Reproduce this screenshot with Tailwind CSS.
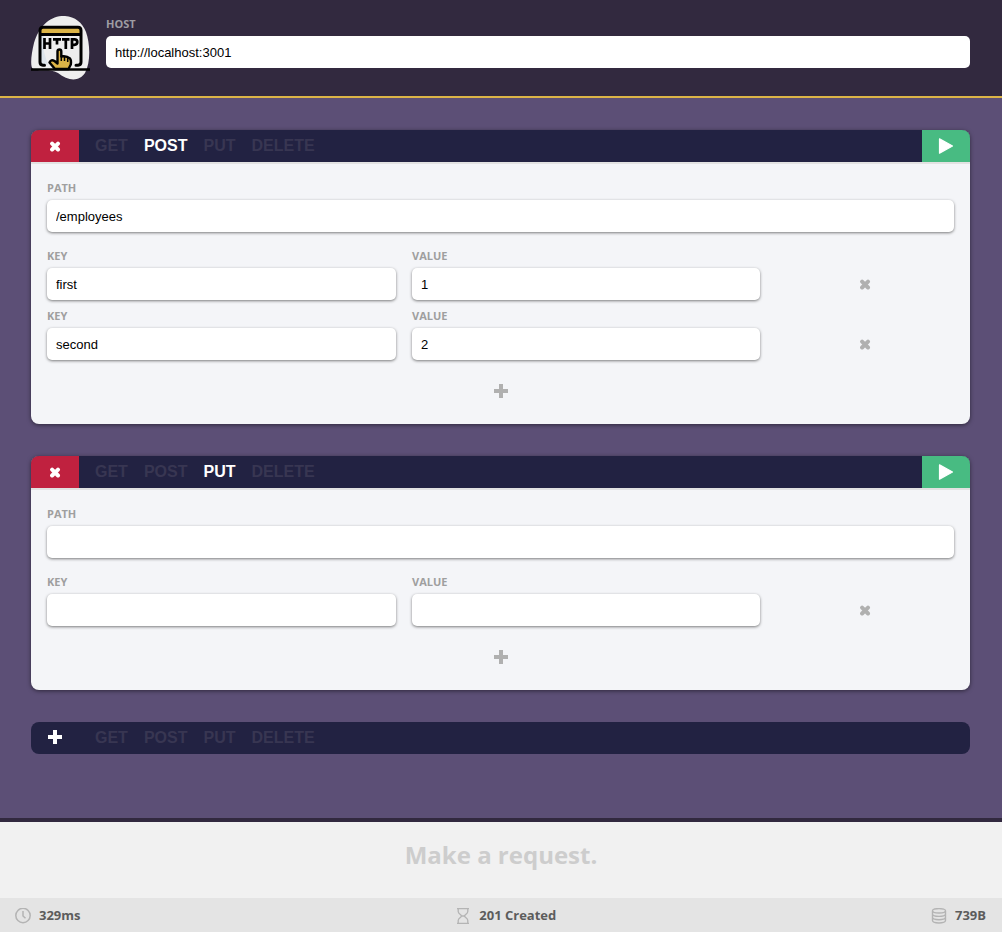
<!DOCTYPE html>
<html lang="en">
<head>
<meta charset="utf-8">
<title>HTTP client</title>
<script src="https://cdn.jsdelivr.net/npm/@tailwindcss/browser@4"></script>
</head>
<body class="flex min-h-screen flex-col bg-[#5c4f76] font-['Open_Sans',sans-serif]">
<svg class="hidden">
  <symbol id="cross" viewBox="0 0 12 12"><path d="M3.1 3.6L9 9.5M9 3.6L3.1 9.5" stroke="currentColor" stroke-width="4" stroke-linecap="round"/></symbol>
  <symbol id="plus" viewBox="0 0 14 14"><path d="M5 0h4v5h5v4H9v5H5V9H0V5h5z" fill="currentColor"/></symbol>
  <symbol id="play" viewBox="0 0 16 16"><path d="M1.5 .8L14.5 8L1.5 15.2z" fill="currentColor" stroke="currentColor" stroke-width="1.2" stroke-linejoin="round"/></symbol>
</svg>

<header class="flex h-[98px] items-start gap-4 border-b-2 border-[#dcb447] bg-[#32293f] py-4 pl-[31px] pr-8">
  <svg class="h-16 w-[59px] shrink-0" viewBox="0 0 59 64" fill="none" role="img" aria-label="HTTP">
    <path d="M34 0C20-1 8 10 3 27C0 39-1 51 2 53C10 56 18 52 27 57C37 65 48 66 54 57C60 46 59 27 55 16C51 6 44 1 34 0z" fill="#eeeeee"/>
    <path d="M10 20H13V36L17 49H12Q10 48 10 45z" fill="#dde4ea"/>
    <path d="M9 18V14Q9 11.5 11.5 11.5H47.500Q50 11.500 50 14V18z" fill="#dcb447"/>
    <path d="M13.500 49.300H12Q9 49 9 46V14.500Q9 11.300 12 11.300H47Q50 11.300 50 14.500V46Q50 49 47 49.300H45M9 18.500H50" stroke="#000" stroke-width="3" stroke-linecap="round"/>
    <path d="M0 53.500H59" stroke="#000" stroke-width="2.600"/>
    <path d="M13.500 22V33M19 22V33M13.500 27.500H19M22 23.400H30M26 23V28.500M31 23.400H38.500M34.800 23V33M41 33V23.300H43.300Q46.300 23.300 46.300 26T43.300 28.800H41" stroke="#000" stroke-width="2.700"/>
    <path d="M24 53L18.500 46.500Q20 43 23.500 45L26.500 47.500V35.500Q26.500 33.500 28.400 33.500T30.300 35.500V40.500Q35.500 39.500 39 42.500Q40.500 44 39.800 48.500L37.500 53z" fill="#dcb447" stroke="#000" stroke-width="2.400" stroke-linejoin="round"/>
    <path d="M30.300 40V45M33.500 41V45M36.700 42V46" stroke="#000" stroke-width="1.500"/>
  </svg>
  <div class="flex min-w-0 flex-1 flex-col gap-1">
    <label for="host" class="text-[11px] leading-4 font-bold text-[#9e9ca3]">HOST</label>
    <input id="host" value="http://localhost:3001" class="h-8 w-full rounded-[5px] bg-white px-[9px] font-['Liberation_Sans',sans-serif] text-[13px] text-black">
  </div>
</header>

<main class="flex flex-1 flex-col gap-8 py-8 pl-[31px] pr-8">
  <section class="overflow-hidden rounded-lg bg-[#f4f5f8] shadow-[0_1px_4px_rgba(0,0,0,0.5)]">
    <div class="flex h-[34px] border-b-2 border-[#e2e2e2] bg-[#222242]">
      <button aria-label="Delete request" class="flex w-12 items-center justify-center bg-[#c0213f] text-white"><svg class="size-3"><use href="#cross"/></svg></button>
      <div class="flex flex-1 items-center gap-4 px-4 font-['Liberation_Sans',sans-serif] text-base font-bold text-[#383652]">
        <button>GET</button><button class="text-white">POST</button><button>PUT</button><button>DELETE</button>
      </div>
      <button aria-label="Send request" class="flex w-12 items-center justify-center bg-[#48bb82] text-white"><svg class="size-4"><use href="#play"/></svg></button>
    </div>
    <div class="flex flex-col p-4 text-[11px] leading-4 font-bold text-[#9f9f9f]">
      <div class="flex flex-col gap-1">
        <label for="path1">PATH</label>
        <input id="path1" value="/employees" class="h-8 w-full rounded-[5px] bg-white px-[9px] font-['Liberation_Sans',sans-serif] text-[13px] font-normal text-black shadow-[0_1px_3px_rgba(0,0,0,0.5)]">
      </div>
      <div class="mt-4 grid grid-cols-[349fr_348fr_178fr] gap-x-4 gap-y-2">
        <div class="flex flex-col gap-1">
          <label for="k1">KEY</label>
          <input id="k1" value="first" class="h-8 w-full rounded-[5px] bg-white px-[9px] font-['Liberation_Sans',sans-serif] text-[13px] font-normal text-black shadow-[0_1px_3px_rgba(0,0,0,0.5)]">
        </div>
        <div class="flex flex-col gap-1">
          <label for="v1">VALUE</label>
          <input id="v1" value="1" class="h-8 w-full rounded-[5px] bg-white px-[9px] font-['Liberation_Sans',sans-serif] text-[13px] font-normal text-black shadow-[0_1px_3px_rgba(0,0,0,0.5)]">
        </div>
        <button aria-label="Remove pair" class="flex h-8 items-center justify-center self-end text-[#b0b0b0]"><svg class="size-3"><use href="#cross"/></svg></button>
        <div class="flex flex-col gap-1">
          <label for="k2">KEY</label>
          <input id="k2" value="second" class="h-8 w-full rounded-[5px] bg-white px-[9px] font-['Liberation_Sans',sans-serif] text-[13px] font-normal text-black shadow-[0_1px_3px_rgba(0,0,0,0.5)]">
        </div>
        <div class="flex flex-col gap-1">
          <label for="v2">VALUE</label>
          <input id="v2" value="2" class="h-8 w-full rounded-[5px] bg-white px-[9px] font-['Liberation_Sans',sans-serif] text-[13px] font-normal text-black shadow-[0_1px_3px_rgba(0,0,0,0.5)]">
        </div>
        <button aria-label="Remove pair" class="flex h-8 items-center justify-center self-end text-[#b0b0b0]"><svg class="size-3"><use href="#cross"/></svg></button>
      </div>
      <button aria-label="Add pair" class="mt-4 flex h-8 w-12 items-center justify-center self-center pb-[2px] text-[#b0b0b0]"><svg class="size-[14px]"><use href="#plus"/></svg></button>
    </div>
  </section>

  <section class="overflow-hidden rounded-lg bg-[#f4f5f8] shadow-[0_1px_4px_rgba(0,0,0,0.5)]">
    <div class="flex h-[34px] border-b-2 border-[#e2e2e2] bg-[#222242]">
      <button aria-label="Delete request" class="flex w-12 items-center justify-center bg-[#c0213f] text-white"><svg class="size-3"><use href="#cross"/></svg></button>
      <div class="flex flex-1 items-center gap-4 px-4 font-['Liberation_Sans',sans-serif] text-base font-bold text-[#383652]">
        <button>GET</button><button>POST</button><button class="text-white">PUT</button><button>DELETE</button>
      </div>
      <button aria-label="Send request" class="flex w-12 items-center justify-center bg-[#48bb82] text-white"><svg class="size-4"><use href="#play"/></svg></button>
    </div>
    <div class="flex flex-col p-4 text-[11px] leading-4 font-bold text-[#9f9f9f]">
      <div class="flex flex-col gap-1">
        <label for="path2">PATH</label>
        <input id="path2" class="h-8 w-full rounded-[5px] bg-white px-[9px] font-['Liberation_Sans',sans-serif] text-[13px] font-normal text-black shadow-[0_1px_3px_rgba(0,0,0,0.5)]">
      </div>
      <div class="mt-4 grid grid-cols-[349fr_348fr_178fr] gap-x-4 gap-y-2">
        <div class="flex flex-col gap-1">
          <label for="k3">KEY</label>
          <input id="k3" class="h-8 w-full rounded-[5px] bg-white px-[9px] font-['Liberation_Sans',sans-serif] text-[13px] font-normal text-black shadow-[0_1px_3px_rgba(0,0,0,0.5)]">
        </div>
        <div class="flex flex-col gap-1">
          <label for="v3">VALUE</label>
          <input id="v3" class="h-8 w-full rounded-[5px] bg-white px-[9px] font-['Liberation_Sans',sans-serif] text-[13px] font-normal text-black shadow-[0_1px_3px_rgba(0,0,0,0.5)]">
        </div>
        <button aria-label="Remove pair" class="flex h-8 items-center justify-center self-end text-[#b0b0b0]"><svg class="size-3"><use href="#cross"/></svg></button>
      </div>
      <button aria-label="Add pair" class="mt-4 flex h-8 w-12 items-center justify-center self-center pb-[2px] text-[#b0b0b0]"><svg class="size-[14px]"><use href="#plus"/></svg></button>
    </div>
  </section>

  <section class="flex h-8 overflow-hidden rounded-lg bg-[#222242]">
    <button aria-label="Add request" class="flex w-12 items-center justify-center pb-[2px] text-white"><svg class="size-[14px]"><use href="#plus"/></svg></button>
    <div class="flex flex-1 items-center gap-4 px-4 font-['Liberation_Sans',sans-serif] text-base font-bold text-[#383652]">
      <button>GET</button><button>POST</button><button>PUT</button><button>DELETE</button>
    </div>
  </section>
</main>

<section class="flex h-20 justify-center border-t-4 border-[#32293f] bg-[#f1f1f1] pt-4">
  <h2 class="text-2xl leading-[34px] font-bold text-[#cdcdcd]">Make a request.</h2>
</section>

<footer class="flex h-[34px] items-center justify-between bg-[#e4e4e4] pt-[2px] pl-[15px] pr-4 text-[13px] font-bold text-[#5c5c5c]">
  <div class="flex items-center gap-2">
    <svg class="size-4" viewBox="0 0 16 16" fill="none" stroke="#b4b4b4" stroke-width="1.5"><circle cx="8" cy="7.500" r="7.200"/><path d="M8 3V8L10.500 10.300" stroke-width="1.500"/></svg>
    <span>329ms</span>
  </div>
  <div class="flex items-center gap-2">
    <svg class="size-4" viewBox="0 0 16 16" fill="none" stroke="#b4b4b4" stroke-width="1.300"><path d="M2 .7H14M2 15.300H14M3.200 1V3.500C3.200 6 6.500 6.800 6.500 8S3.200 10 3.200 12.500V15M12.800 1V3.500C12.800 6 9.500 6.800 9.500 8S12.800 10 12.800 12.500V15M5.500 8H10.500"/></svg>
    <span>201 Created</span>
  </div>
  <div class="flex items-center gap-2">
    <svg class="size-4" viewBox="0 0 16 16" fill="none" stroke="#b4b4b4" stroke-width="1.400"><ellipse cx="8" cy="2.800" rx="6.500" ry="2.200"/><path d="M1.500 3V12.600C1.500 15.800 14.500 15.800 14.500 12.600V3M1.500 6C1.500 9.200 14.500 9.200 14.500 6M1.500 9.300C1.500 12.500 14.500 12.500 14.500 9.300"/></svg>
    <span>739B</span>
  </div>
</footer>
</body>
</html>
